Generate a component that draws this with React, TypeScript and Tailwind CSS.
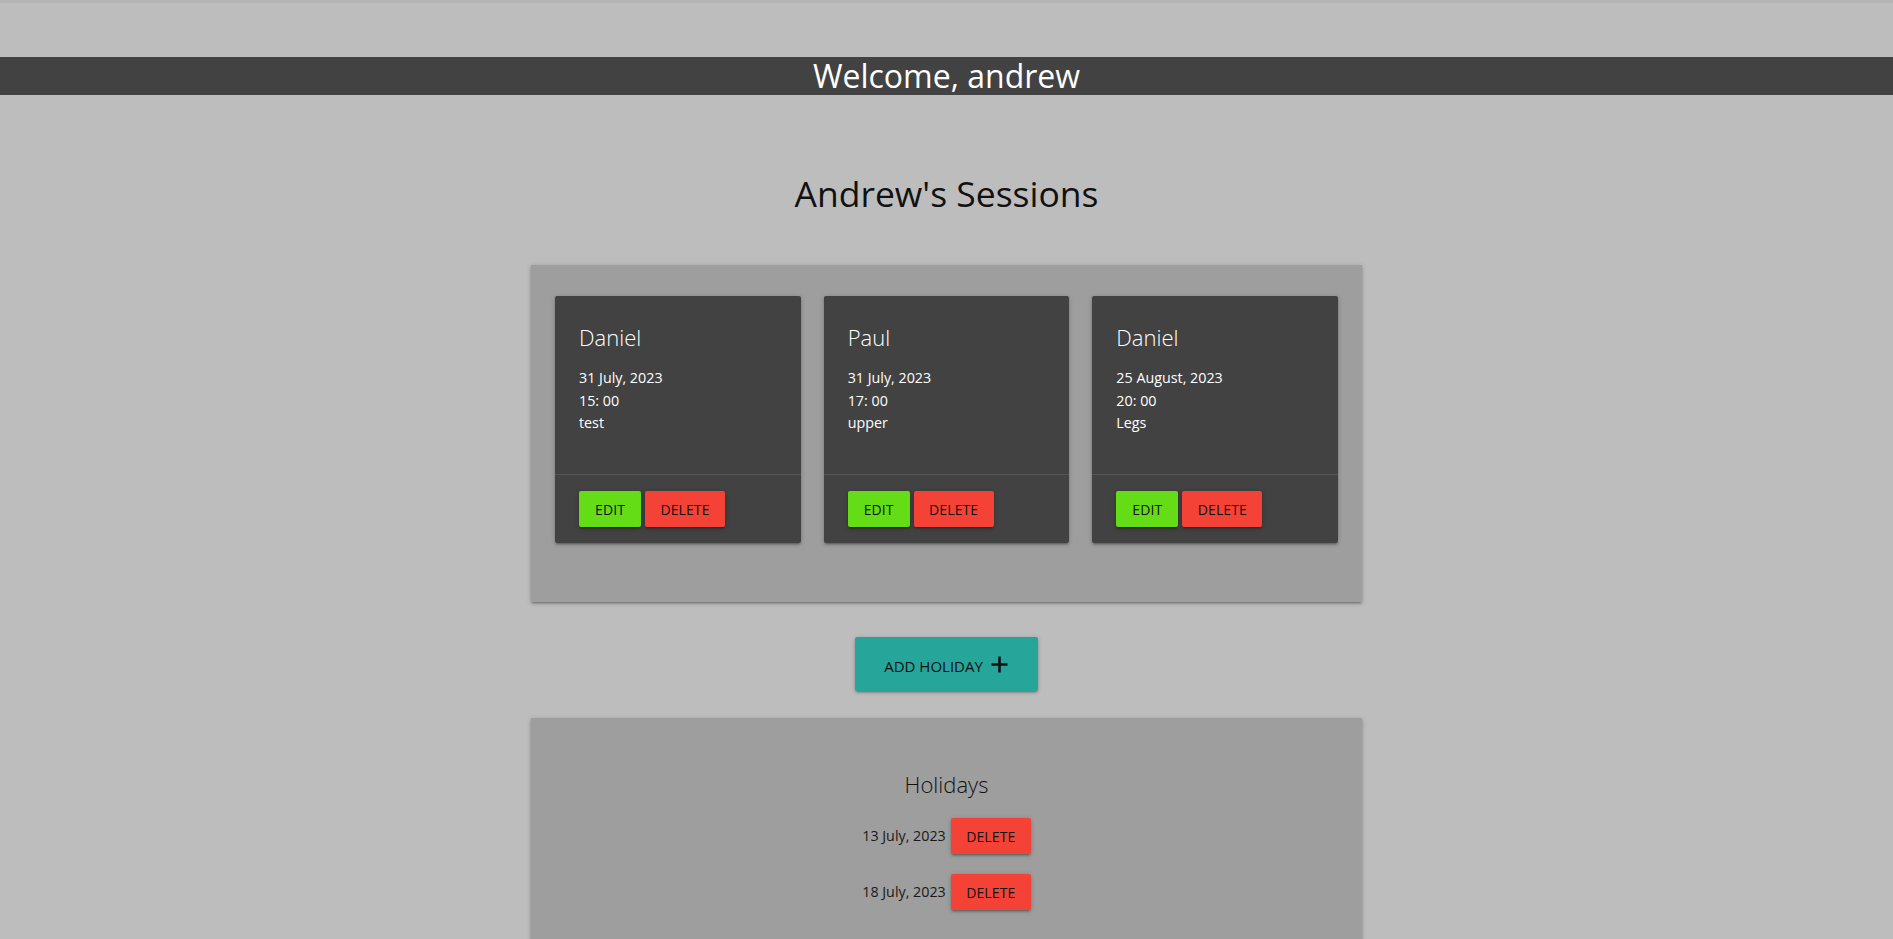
import React from "react";

const sessions = [
  { name: "Daniel", date: "31 July, 2023", time: "15: 00", note: "test" },
  { name: "Paul", date: "31 July, 2023", time: "17: 00", note: "upper" },
  { name: "Daniel", date: "25 August, 2023", time: "20: 00", note: "Legs" },
];

const holidays = ["13 July, 2023", "18 July, 2023"];

const shadow =
  "shadow-[0_2px_2px_0_rgba(0,0,0,0.14),0_3px_1px_-2px_rgba(0,0,0,0.12),0_1px_5px_0_rgba(0,0,0,0.2)]";

function Btn({ color, width, children }: { color: "green" | "red"; width: string; children: React.ReactNode }) {
  const bg = color === "green" ? "bg-[#64dd17]" : "bg-[#f44336]";
  return (
    <button
      className={`${bg} ${width} ${shadow} h-[36px] rounded-[2px] flex items-center justify-center text-[14px] tracking-[0.1px] text-[#111] uppercase`}
    >
      {children}
    </button>
  );
}

export default function App() {
  return (
    <div className="min-h-screen bg-[#bdbdbd] font-['Open_Sans','Noto_Sans',sans-serif]">
      <div className="h-[3px] bg-[#b3b3b3]" />
      <div className="mt-[54px] h-[38px] bg-[#424242] text-white text-center text-[32px] leading-[38px]">
        Welcome, andrew
      </div>
      <h1 className="mt-[76px] text-center text-[35.5px] leading-[44px] text-[#111]">Andrew&apos;s Sessions</h1>

      <div className={`mx-auto mt-[50px] w-[831px] bg-[#9e9e9e] ${shadow} px-6 pt-[31px] pb-[59px]`}>
        <div className="grid grid-cols-3 gap-[23px]">
          {sessions.map((s, i) => (
            <div key={i} className={`bg-[#424242] rounded-[2px] ${shadow} text-white`}>
              <div className="h-[178px] px-6 pt-[25px]">
                <div className="text-[22px] leading-[32px] font-light">{s.name}</div>
                <div className="mt-[14px] text-[14.3px] leading-[22.5px]">
                  <div>{s.date}</div>
                  <div>{s.time}</div>
                  <div>{s.note}</div>
                </div>
              </div>
              <div className="border-t border-[#555555] px-6 py-4 flex gap-[4px]">
                <Btn color="green" width="w-[62px]">Edit</Btn>
                <Btn color="red" width="w-[80px]">Delete</Btn>
              </div>
            </div>
          ))}
        </div>
      </div>

      <div className="flex justify-center mt-[35px]">
        <button
          className={`w-[183px] h-[54px] bg-[#26a69a] rounded-[2px] ${shadow} flex items-center justify-center gap-[7px] text-[15px] text-[#111]`}
        >
          <span className="pt-[5px]">ADD HOLIDAY</span>
          <svg width="19" height="19" viewBox="0 0 19 19" className="shrink-0">
            <path d="M9.5 1.5v16M1.5 9.5h16" stroke="#111" strokeWidth="2.6" fill="none" />
          </svg>
        </button>
      </div>

      <div className={`mx-auto mt-[27px] w-[831px] bg-[#9e9e9e] ${shadow} pt-[50px] pb-[40px]`}>
        <div className="text-center text-[22px] leading-[32px] font-light text-[#111]">Holidays</div>
        <div className="mt-[18px] flex flex-col items-center gap-[20px]">
          {holidays.map((h, i) => (
            <div key={i} className="flex items-center gap-[5px]">
              <span className="text-[14.3px] text-[#1a1a1a]">{h}</span>
              <Btn color="red" width="w-[80px]">Delete</Btn>
            </div>
          ))}
        </div>
      </div>
    </div>
  );
}
